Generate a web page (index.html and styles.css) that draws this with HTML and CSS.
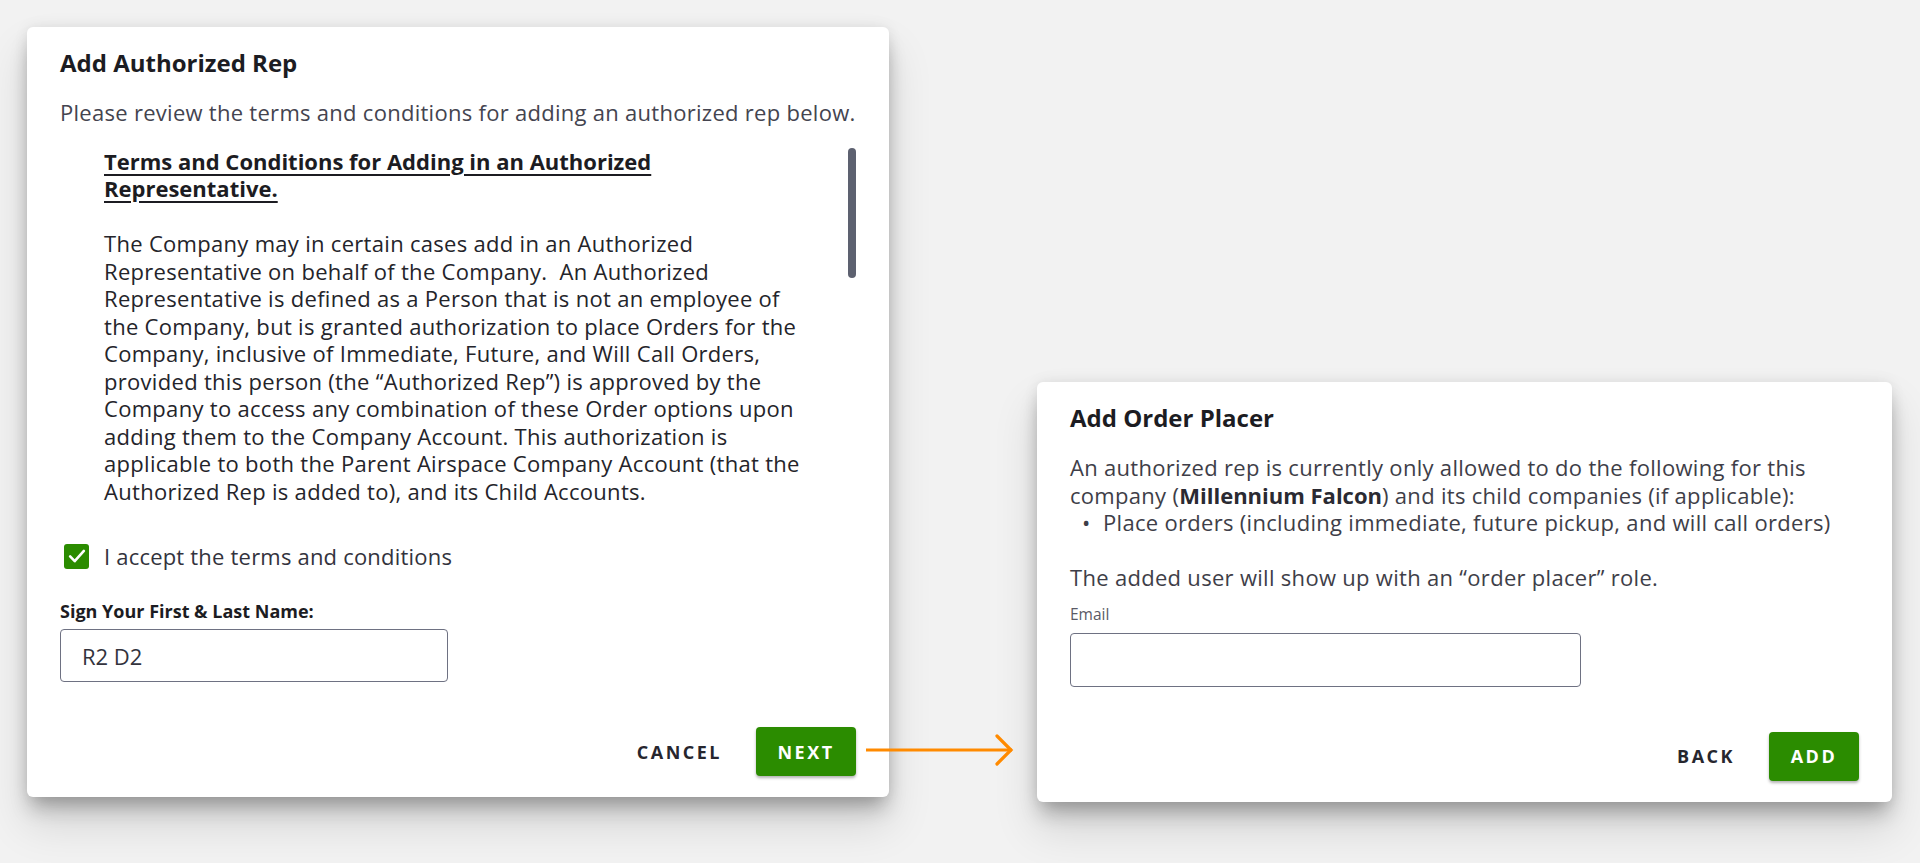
FILE: index.html
```html
<!DOCTYPE html>
<html lang="en">
<head>
<meta charset="utf-8">
<title>Add Authorized Rep</title>
<link rel="stylesheet" href="styles.css">
</head>
<body>
<main class="stage">
  <section class="card card-rep">
    <h2 class="card-title">Add Authorized Rep</h2>
    <p class="lead">Please review the terms and conditions for adding an authorized rep below.</p>
    <div class="terms">
      <div class="terms-body">
        <h3 class="terms-heading">Terms and Conditions for Adding in an Authorized<br>Representative.</h3>
        <p class="terms-text">The Company may in certain cases add in an Authorized<br>Representative on behalf of the Company.&nbsp; An Authorized<br>Representative is defined as a Person that is not an employee of<br>the Company, but is granted authorization to place Orders for the<br>Company, inclusive of Immediate, Future, and Will Call Orders,<br>provided this person (the “Authorized Rep”) is approved by the<br>Company to access any combination of these Order options upon<br>adding them to the Company Account. This authorization is<br>applicable to both the Parent Airspace Company Account (that the<br>Authorized Rep is added to), and its Child Accounts.</p>
      </div>
      <div class="scroll-thumb"></div>
    </div>
    <label class="check-row">
      <span class="checkbox">
        <svg viewBox="0 0 24 24" width="22" height="22"><path d="M4.5 12.5l5 5.2L19.5 6.5" fill="none" stroke="#fff" stroke-width="2.8" stroke-linecap="round" stroke-linejoin="round"/></svg>
      </span>
      <span class="check-label">I accept the terms and conditions</span>
    </label>
    <div class="field">
      <div class="field-label strong">Sign Your First &amp; Last Name:</div>
      <div class="input input-name">R2 D2</div>
    </div>
    <div class="actions">
      <button class="btn-text">CANCEL</button>
      <button class="btn-primary btn-next">NEXT</button>
    </div>
  </section>

  <div class="connector">
    <svg class="arrow" viewBox="0 0 152 34" width="152" height="34">
      <path d="M2 17H148" stroke="#ff8a00" stroke-width="3.2" fill="none"/>
      <path d="M133 3l14 14-14 14" stroke="#ff8a00" stroke-width="3.2" fill="none" stroke-linecap="round" stroke-linejoin="miter"/>
    </svg>
  </div>

  <section class="card card-placer">
    <h2 class="card-title">Add Order Placer</h2>
    <div class="placer-text">
      <p>An authorized rep is currently only allowed to do the following for this<br>company (<b>Millennium Falcon</b>) and its child companies (if applicable):</p>
      <ul class="bullets">
        <li>Place orders (including immediate, future pickup, and will call orders)</li>
      </ul>
      <p class="role-note">The added user will show up with an “order placer” role.</p>
    </div>
    <div class="field">
      <div class="field-label small">Email</div>
      <div class="input input-email"></div>
    </div>
    <div class="actions">
      <button class="btn-text">BACK</button>
      <button class="btn-primary btn-add">ADD</button>
    </div>
  </section>
</main>
</body>
</html>
```

FILE: styles.css
```css
* { box-sizing: border-box; }

html {
  background: #f2f2f2;
}

body {
  margin: 0;
  padding: 0;
  min-height: 100vh;
  background: #f2f2f2;
  font-family: "Open Sans", "Noto Sans", sans-serif;
  color: #3e3e48;
}

.stage {
  display: flex;
  align-items: flex-start;
  padding: 27px 28px 0 27px;
}

.card {
  background: #fff;
  border-radius: 6px;
  box-shadow: 0 14px 20px -4px rgba(0,0,0,.28), 0 26px 44px 2px rgba(0,0,0,.12), 0 0 14px rgba(0,0,0,.08);
  padding: 20px 33px 21px 33px;
}

.card-rep { width: 862px; }
.card-placer { width: 855px; margin-top: 355px; }

.card-title {
  margin: 0;
  font-size: 24px;
  line-height: 31px;
  font-weight: 700;
  color: #1c1c22;
}

.lead {
  margin: 21px 0 0;
  font-size: 22px;
  line-height: 27.5px;
  color: #44444f;
  letter-spacing: 0.28px;
  white-space: nowrap;
}

.terms {
  position: relative;
  margin-top: 21px;
  height: 376px;
}

.terms-body {
  padding-left: 44px;
  color: #24242a;
  font-size: 22px;
  line-height: 27.5px;
  letter-spacing: 0.3px;
  white-space: nowrap;
}

.terms-heading {
  margin: 0;
  font-size: 22px;
  line-height: 27.5px;
  font-weight: 700;
  letter-spacing: 0;
  text-decoration: underline;
  text-decoration-thickness: 2px;
  text-underline-offset: 4px;
  color: #1c1c22;
}

.terms-text {
  margin: 27.5px 0 0;
}

.scroll-thumb {
  position: absolute;
  top: 0;
  right: 0;
  width: 8px;
  height: 130px;
  border-radius: 4px;
  background: #5d6170;
}

.check-row {
  display: flex;
  align-items: center;
  gap: 15px;
  margin-top: 19px;
  padding-left: 4px;
}

.checkbox {
  width: 25px;
  height: 25px;
  border-radius: 3px;
  background: #2b8c00;
  display: flex;
  align-items: center;
  justify-content: center;
}

.check-label {
  font-size: 22px;
  line-height: 27.5px;
  letter-spacing: 0.2px;
  color: #33333d;
}

.field { margin-top: 30px; }

.card-placer .field { margin-top: 12px; }

.field-label.strong {
  font-size: 18px;
  line-height: 22px;
  font-weight: 700;
  color: #1c1c22;
  margin-bottom: 7px;
}

.field-label.small {
  font-size: 15.5px;
  line-height: 20px;
  color: #5a5a66;
  margin-bottom: 9px;
}

.input {
  border: 1.5px solid #6e7182;
  border-radius: 4px;
  background: #fff;
  font-size: 22px;
  color: #33333d;
  display: flex;
  align-items: center;
}

.input-name { width: 388px; height: 53px; padding-left: 21px; }
.input-email { width: 511px; height: 54px; }

.actions {
  display: flex;
  justify-content: flex-end;
  align-items: center;
  gap: 18px;
  margin-top: 45px;
}

.btn-text, .btn-primary {
  font-family: "Open Sans", "Noto Sans", sans-serif;
  font-weight: 700;
  font-size: 18px;
  letter-spacing: 2.5px;
  border: 0;
  background: none;
  cursor: pointer;
  padding: 0;
}

.btn-text {
  color: #26262e;
  padding: 0 16px;
  height: 49px;
}

.btn-primary {
  color: #fff;
  background: #2b8c00;
  border-radius: 4px;
  height: 49px;
  box-shadow: 0 2px 3px rgba(0,0,0,.3);
}

.btn-next { width: 100px; }
.btn-add { width: 90px; }

.connector {
  width: 148px;
  flex: none;
  position: relative;
  align-self: stretch;
}

.arrow {
  position: absolute;
  left: -25px;
  top: 706px;
}

.placer-text {
  margin-top: 21px;
  font-size: 22px;
  line-height: 27.5px;
  letter-spacing: 0.3px;
  color: #3e3e48;
  white-space: nowrap;
}

.placer-text p { margin: 0; }
.placer-text b { color: #2a2a32; letter-spacing: 0; }

.bullets {
  margin: 0;
  padding-left: 33px;
  list-style: none;
}

.bullets li { position: relative; }
.bullets li::before {
  content: "•";
  position: absolute;
  left: -21px;
}

.placer-text .role-note { margin-top: 27.5px; }
```
